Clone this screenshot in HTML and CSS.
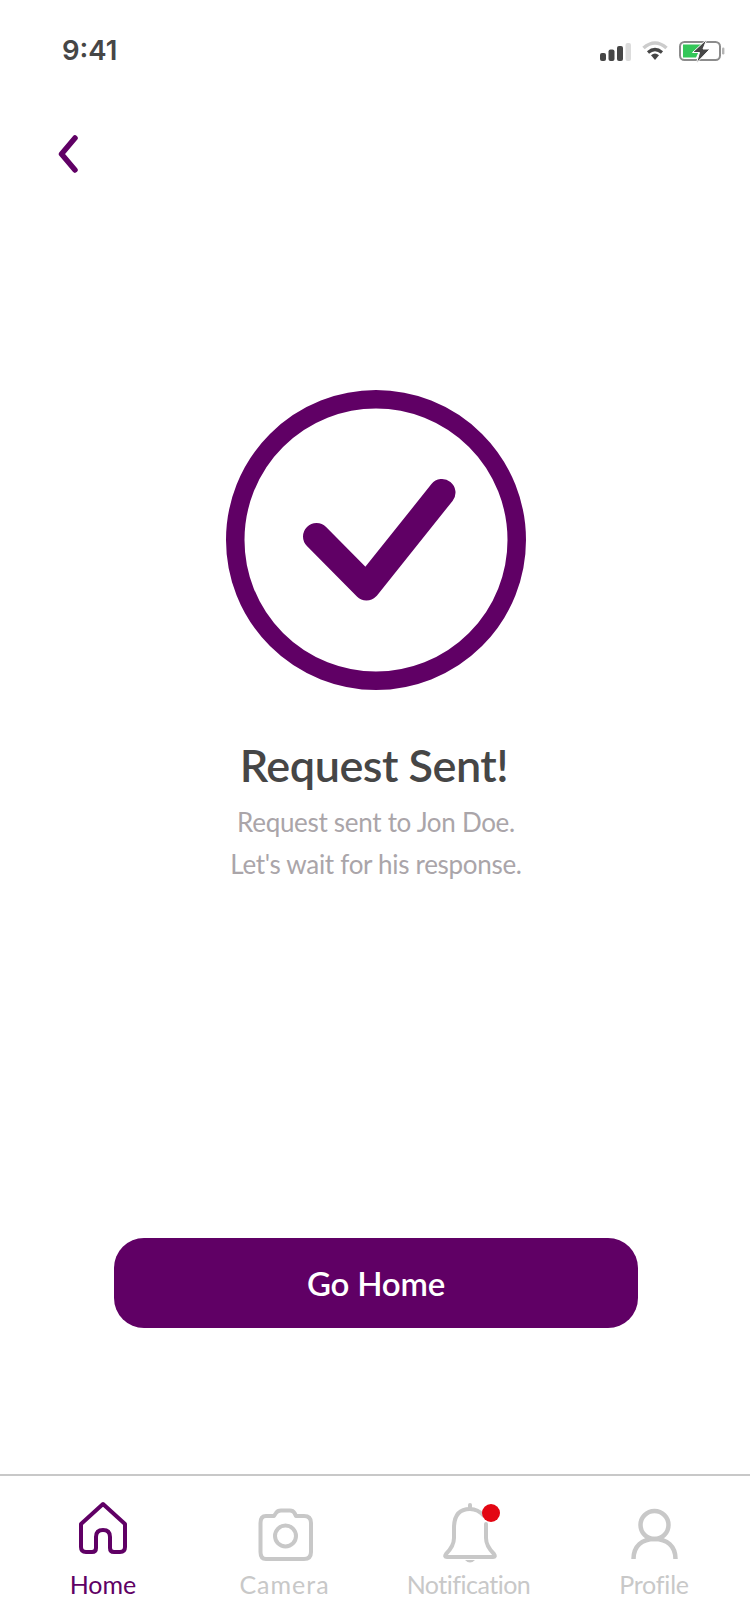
FILE: index.html
```html
<!DOCTYPE html>
<html lang="en">
<head>
    <meta charset="UTF-8">
    <meta name="viewport" content="width=device-width, initial-scale=1.0">
    <title>Request Sent</title>
    <link rel="stylesheet" href="styles.css">
</head>
<body>

    <div class="status-bar">
        <span class="time">9:41</span>
        <div class="status-icons">
            <svg class="signal" width="31" height="18" viewBox="0 0 31 18">
                <rect x="0" y="10" width="6" height="8" rx="2" fill="#464646"/>
                <rect x="8.500" y="6.500" width="6" height="11.500" rx="2" fill="#464646"/>
                <rect x="17" y="3" width="6" height="15" rx="2" fill="#464646"/>
                <rect x="25.500" y="0" width="5.500" height="18" rx="2" fill="#dcdcdc"/>
            </svg>
            <svg class="wifi" width="26" height="20" viewBox="0 0 26 20">
                <path d="M1.500 7 Q13 -3 24.500 7" fill="none" stroke="#cccccc" stroke-width="3.600"/>
                <path d="M6 11.500 Q13 5.500 20 11.500" fill="none" stroke="#464646" stroke-width="3.200"/>
                <path d="M9 14.200 Q13 11 17 14.200 L13 19 Z" fill="#464646"/>
            </svg>
            <svg class="battery" width="46" height="24" viewBox="0 -1 46 24">
                <rect x="1" y="2" width="40" height="18" rx="4.500" fill="none" stroke="#8c8c8c" stroke-width="2"/>
                <path d="M4 4.500 H23 L17 17.500 H4 Z" fill="#34c759"/>
                <path d="M28 -1 L13.500 12.500 H20.500 L17.500 23 L31 9 H24 Z" fill="#464646" stroke="#fff" stroke-width="1"/>
                <rect x="43" y="7.500" width="2.400" height="7" rx="1.200" fill="#b5b5b5"/>
            </svg>
        </div>
    </div>

    <div class="nav">
        <svg width="22" height="40" viewBox="0 0 22 40">
            <path d="M17 4 L3.500 20 L17 36" fill="none" stroke="#600065" stroke-width="5.500" stroke-linecap="round" stroke-linejoin="round"/>
        </svg>
    </div>

    <div class="content">
        <svg class="check" width="300" height="300" viewBox="0 0 300 300">
            <circle cx="150" cy="150" r="140.750" fill="none" stroke="#600065" stroke-width="18.500"/>
            <path d="M90.500 146.500 L140.500 197 L216 102.500" fill="none" stroke="#600065" stroke-width="27" stroke-linecap="round" stroke-linejoin="round"/>
        </svg>
        <h1>Request Sent!</h1>
        <p>Request sent to Jon Doe.<br>Let's wait for his response.</p>
    </div>

    <button class="home-btn">Go Home</button>

    <div class="tabs">
        <div class="tab active">
            <svg width="48" height="60" viewBox="0 0 48 60">
                <path d="M24 2 L46 22 V45 Q46 50 41 50 H35 Q31 50 31 46 V35 Q31 28 24 28 Q17 28 17 35 V46 Q17 50 13 50 H7 Q2 50 2 45 V22 Z" fill="none" stroke="#600065" stroke-width="4" stroke-linejoin="round"/>
            </svg>
            <span>Home</span>
        </div>
        <div class="tab">
            <svg width="56" height="60" viewBox="0 -5 56 60">
                <path d="M9 9 H17 L19 6 Q20.500 3.500 24 3.500 H33 Q36 3.500 37.500 6 L39 9 H47 Q54 9 54 16 V45 Q54 52 47 52 H9 Q3.500 52 3.500 45 V16 Q3.500 9 9 9 Z" fill="none" stroke="#c8c8c8" stroke-width="4" stroke-linejoin="round"/>
                <circle cx="28.500" cy="29" r="10.500" fill="none" stroke="#c8c8c8" stroke-width="4"/>
            </svg>
            <span class="label-camera">Camera</span>
        </div>
        <div class="tab">
            <div class="bell">
                <svg width="56" height="60" viewBox="-1 -2 56 60">
                    <path d="M42 12 Q36 5 28 5 Q12 5 12 24 V34 Q12 42 4 50 Q2 53 5 53 H51 Q54 53 52 50 Q44 42 44 34 V20" fill="none" stroke="#c8c8c8" stroke-width="4" stroke-linecap="round" stroke-linejoin="round"/>
                    <path d="M28 1 V5" stroke="#c8c8c8" stroke-width="4" stroke-linecap="round"/>
                    <path d="M23 56 H33 Q28 61 23 56 Z" fill="#c8c8c8"/>
                </svg>
                <span class="dot"></span>
            </div>
            <span class="label-notification">Notification</span>
        </div>
        <div class="tab">
            <svg width="52" height="60" viewBox="0 0 52 60">
                <circle cx="26.500" cy="23" r="14" fill="none" stroke="#c8c8c8" stroke-width="4.500"/>
                <path d="M5.500 57 C5.500 44 14 37 26.500 37 C39 37 47.500 44 47.500 57" fill="none" stroke="#c8c8c8" stroke-width="4.500"/>
            </svg>
            <span class="label-profile">Profile</span>
        </div>
    </div>

</body>
</html>
```

FILE: styles.css
```css
html, body {
    margin: 0;
    padding: 0;
}

body {
    width: 750px;
    height: 1624px;
    display: flex;
    flex-direction: column;
    overflow: hidden;
    background-color: #fff;
    font-family: "Lato", "Liberation Sans", sans-serif;
}

.status-bar {
    height: 100px;
    box-sizing: border-box;
    padding: 35px 25px 0 62px;
    display: flex;
    justify-content: space-between;
    align-items: flex-start;
}

.time {
    font-family: "Inter", "Liberation Sans", sans-serif;
    font-size: 27.500px;
    font-weight: 600;
    line-height: 30px;
    color: #464646;
}

.status-icons {
    display: flex;
    align-items: center;
    gap: 11px;
    padding-top: 4px;
}

.signal {
    margin-top: 2px;
}

.nav {
    height: 290px;
    box-sizing: border-box;
    padding: 34px 0 0 58px;
}

.nav svg {
    display: block;
}

.content {
    display: flex;
    flex-direction: column;
    align-items: center;
    padding-left: 2px;
}

.check {
    display: block;
}

h1 {
    margin: 48px 4px 0 0;
    font-size: 45px;
    font-weight: 600;
    letter-spacing: -0.500px;
    line-height: 54px;
    color: #464646;
    text-align: center;
}

p {
    margin: 9px 0 0;
    font-size: 26px;
    font-weight: 400;
    letter-spacing: -0.300px;
    line-height: 42px;
    color: #aaa5a9;
    text-align: center;
}

.home-btn {
    width: 524px;
    height: 90px;
    margin: 353px 0 0 114px;
    border: none;
    border-radius: 30px;
    background-color: #600065;
    color: #fff;
    font-family: inherit;
    font-size: 33px;
    font-weight: 600;
    letter-spacing: -0.200px;
}

.tabs {
    margin-top: auto;
    height: 150px;
    box-sizing: border-box;
    border-top: 2px solid #c8c8c8;
    display: grid;
    grid-template-columns: 180px 183px 185px 186px;
    padding: 26px 0 0 13px;
}

.tab {
    display: flex;
    flex-direction: column;
    align-items: center;
    gap: 7px;
    font-size: 25px;
    font-weight: 400;
    line-height: 30px;
    color: #c8c8c8;
}

.tab.active {
    color: #600065;
}

.tab svg {
    display: block;
    overflow: visible;
}

.label-camera {
    letter-spacing: 1px;
}

.label-notification {
    letter-spacing: -0.500px;
}

.label-profile {
    letter-spacing: -0.200px;
}

.bell {
    position: relative;
    height: 60px;
}

.dot {
    position: absolute;
    top: 2px;
    left: 41px;
    width: 18px;
    height: 18px;
    border-radius: 50%;
    background-color: #e30613;
}
```
